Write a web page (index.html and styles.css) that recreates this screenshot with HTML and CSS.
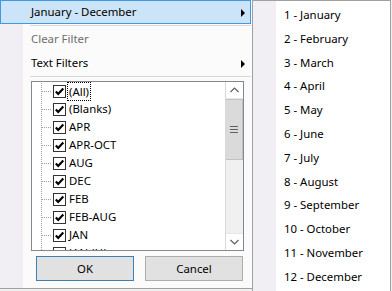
FILE: index.html
```html
<!DOCTYPE html>
<html lang="en">
<head>
  <meta charset="UTF-8">
  <title>Filter</title>
  <link rel="stylesheet" href="styles.css">
</head>
<body>
  <div class="screen">
    <div class="panel">
      <div class="item active">January - December<i class="arrow"></i></div>
      <div class="sep"></div>
      <div class="item disabled">Clear Filter</div>
      <div class="item">Text Filters<i class="arrow"></i></div>
      <div class="sep"></div>

      <div class="tree">
        <ul class="list">
          <li><span class="box"></span><span class="label focus">(All)</span></li>
          <li><span class="box"></span><span class="label">(Blanks)</span></li>
          <li><span class="box"></span><span class="label">APR</span></li>
          <li><span class="box"></span><span class="label">APR-OCT</span></li>
          <li><span class="box"></span><span class="label">AUG</span></li>
          <li><span class="box"></span><span class="label">DEC</span></li>
          <li><span class="box"></span><span class="label">FEB</span></li>
          <li><span class="box"></span><span class="label">FEB-AUG</span></li>
          <li><span class="box"></span><span class="label">JAN</span></li>
          <li><span class="box"></span><span class="label">JAN-JUL</span></li>
        </ul>
        <div class="scrollbar">
          <div class="sb-btn">
            <svg width="9" height="6" viewBox="0 0 9 6"><polyline points="0.5,5 4.5,1 8.5,5" fill="none" stroke="#606060" stroke-width="1.2"/></svg>
          </div>
          <div class="thumb"><span class="grip"></span></div>
          <div class="track"></div>
          <div class="sb-btn">
            <svg width="9" height="6" viewBox="0 0 9 6"><polyline points="0.5,1 4.5,5 8.5,1" fill="none" stroke="#606060" stroke-width="1.2"/></svg>
          </div>
        </div>
      </div>

      <div class="buttons">
        <button class="btn default">OK</button>
        <button class="btn">Cancel</button>
      </div>
    </div>

    <ul class="submenu">
      <li>1 - January</li>
      <li>2 - February</li>
      <li>3 - March</li>
      <li>4 - April</li>
      <li>5 - May</li>
      <li>6 - June</li>
      <li>7 - July</li>
      <li>8 - August</li>
      <li>9 - September</li>
      <li>10 - October</li>
      <li>11 - November</li>
      <li>12 - December</li>
    </ul>
  </div>
</body>
</html>
```

FILE: styles.css
```css
body {
  margin: 0;
  background-color: #f0f0f0;
  font-family: "Noto Sans", sans-serif;
  font-size: 11.4px;
  color: #000;
}

.screen {
  display: flex;
  align-items: flex-start;
}

.panel {
  width: 252px;
  height: 288px;
  border-bottom: 1px solid #a0a0a0;
  background: linear-gradient(to right, #f1eff3 23px, #fbfbfb 23px);
}

.item {
  position: relative;
  height: 24px;
  line-height: 24px;
  padding-left: 31px;
  box-sizing: border-box;
  width: 251px;
}

.item.active {
  background-color: #cce4f7;
  border: 1px solid #3d98e8;
  padding-left: 30px;
  line-height: 22px;
}

.item.disabled {
  color: #6d6d6d;
}

.arrow {
  position: absolute;
  right: 6px;
  top: 9px;
  width: 0;
  height: 0;
  border-top: 4px solid transparent;
  border-bottom: 4px solid transparent;
  border-left: 4px solid #000;
}

.item.active .arrow {
  right: 5px;
  top: 8px;
}

.sep {
  height: 1px;
  margin: 1px 0 1px 30px;
  background-color: #d7d7d7;
  width: 221px;
}

.tree {
  display: flex;
  margin: 4px 0 0 31px;
  width: 213px;
  height: 170px;
  box-sizing: border-box;
  border: 1px solid #828790;
  background-color: #fff;
}

.list {
  flex: 1;
  margin: 0;
  padding: 0;
  list-style: none;
  overflow: hidden;
  background-image: linear-gradient(to bottom, #a0a0a0 50%, transparent 50%);
  background-size: 1px 2px;
  background-repeat: repeat-y;
  background-position: 9px 9px;
}

.list li {
  display: flex;
  align-items: center;
  height: 18px;
  padding-left: 10px;
}

.list li::before {
  content: "";
  width: 10px;
  height: 1px;
  background-image: linear-gradient(to right, #a0a0a0 50%, transparent 50%);
  background-size: 2px 1px;
}

.box {
  width: 13px;
  height: 13px;
  box-sizing: border-box;
  border: 1px solid #333;
  background: #fff url("data:image/svg+xml,%3Csvg xmlns='http://www.w3.org/2000/svg' width='11' height='11' viewBox='0 0 11 11'%3E%3Cpolyline points='1.8,5.4 4.2,7.9 9.3,2.6' fill='none' stroke='%23000' stroke-width='2.2'/%3E%3C/svg%3E") center no-repeat;
  margin-left: 1px;
}

.label {
  margin-left: 2px;
  padding: 0 1px;
  line-height: 16px;
}

.label.focus {
  outline: 1px dotted #000;
  outline-offset: 0;
  line-height: 17px;
}

.scrollbar {
  width: 17px;
  display: flex;
  flex-direction: column;
  background-color: #f0f0f0;
  border-left: 1px solid #d9d9d9;
}

.sb-btn {
  height: 17px;
  display: flex;
  align-items: center;
  justify-content: center;
  background-color: #fff;
  border-bottom: 1px solid #e6e6e6;
  box-sizing: border-box;
}

.sb-btn:last-child {
  border-bottom: none;
  border-top: 1px solid #e6e6e6;
}

.thumb {
  height: 59px;
  background-color: #dadada;
  border: 1px solid #c2c2c2;
  border-left: none;
  display: flex;
  align-items: center;
  justify-content: center;
}

.grip {
  width: 8px;
  height: 5px;
  border-top: 1px solid #606060;
  border-bottom: 1px solid #606060;
  background: linear-gradient(#606060, #606060) center / 8px 1px no-repeat;
}

.track {
  flex: 1;
}

.buttons {
  display: flex;
  gap: 11px;
  margin: 5px 0 0 36px;
}

.btn {
  width: 98px;
  height: 25px;
  padding: 0;
  font-family: inherit;
  font-size: 11.4px;
  color: #000;
  background-color: #e1e1e1;
  border: 1px solid #adadad;
}

.btn.default {
  border-color: #3c7fb1;
}

.submenu {
  margin: 0;
  padding: 2px 0 0;
  list-style: none;
  width: 139px;
  height: 291px;
  box-sizing: border-box;
  border: 1px solid #a0a0a0;
  border-bottom: none;
  background: linear-gradient(to right, #f1eff3 23px, #fff 23px);
}

.submenu li {
  height: 23.8px;
  line-height: 23.8px;
  padding-left: 31px;
}
```
